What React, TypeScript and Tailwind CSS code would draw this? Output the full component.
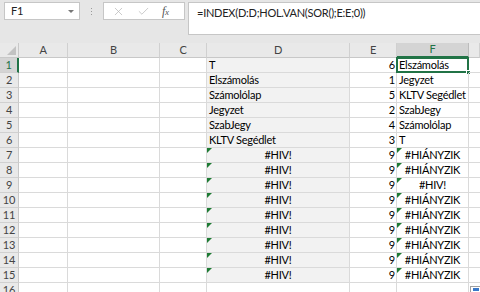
import React from 'react';
import { X, Check } from 'lucide-react';

const cols = [
  { id: 'A', w: 'w-[49px]' },
  { id: 'B', w: 'w-[92px]' },
  { id: 'C', w: 'w-[47px]' },
  { id: 'D', w: 'w-[143px]' },
  { id: 'E', w: 'w-[47px]' },
  { id: 'F', w: 'w-[72px]' },
  { id: 'G', w: 'w-[11px]' },
];

const dVals = ['T', 'Elszámolás', 'Számolólap', 'Jegyzet', 'SzabJegy', 'KLTV Segédlet'];
const fVals = ['Elszámolás', 'Jegyzet', 'KLTV Segédlet', 'SzabJegy', 'Számolólap', 'T'];
const eVals = [6, 1, 5, 2, 4, 3];

const rows = Array.from({ length: 16 }, (_, i) => {
  const n = i + 1;
  if (n <= 6) return { n, d: dVals[i], e: String(eVals[i]), f: fVals[i], err: false };
  if (n <= 15) return { n, d: '#HIV!', e: '9', f: n === 9 ? '#HIV!' : '#HIÁNYZIK', err: true };
  return { n, d: '', e: '', f: '', err: false };
});

// small green "error" corner marker
const Tri = () => (
  <span className="absolute left-0 top-0 w-0 h-0 border-t-[5px] border-t-[#1e7b34] border-r-[5px] border-r-transparent" />
);

const App: React.FC = () => {
  return (
    <div className="w-[480px] h-[292px] overflow-hidden bg-white font-['Lato',sans-serif] text-[11px] tracking-[-0.25px] text-black">
      {/* Formula bar */}
      <div className="h-[43px] bg-[#e6e6e6] flex items-start pt-[2px]">
        <div className="ml-[4px] w-[76px] h-[18px] bg-white border border-[#c6c6c6] flex items-center justify-between pl-[6px] pr-[5px]">
          <span className="text-[#222]">F1</span>
          <span className="w-0 h-0 border-l-[3px] border-r-[3px] border-t-[3px] border-l-transparent border-r-transparent border-t-[#777]" />
        </div>
        <div className="w-[23px] h-[18px] flex flex-col items-center justify-center gap-[2px]">
          <span className="w-[1px] h-[1px] bg-[#9a9a9a]" />
          <span className="w-[1px] h-[1px] bg-[#9a9a9a]" />
          <span className="w-[1px] h-[1px] bg-[#9a9a9a]" />
        </div>
        <div className="w-[82px] h-[18px] bg-white border border-[#c6c6c6] flex items-center pl-[8px] gap-[12px]">
          <X size={13} strokeWidth={1.3} className="text-[#b5b5b5]" />
          <Check size={13} strokeWidth={1.3} className="text-[#b5b5b5]" />
          <span className="font-['Liberation_Serif',serif] italic text-[12px] text-[#555] leading-none">
            f<span className="text-[9px]">x</span>
          </span>
        </div>
        <div className="ml-[3px] flex-1 h-[33px] bg-white border border-r-0 border-[#c6c6c6] pl-[8px] pt-[2px] text-[#222]">
          =INDEX(D:D;HOL.VAN(SOR();E:E;0))
        </div>
      </div>

      {/* Column headers */}
      <div className="flex h-[15px] bg-[#e9e9e9] text-[#444]">
        <div className="w-[19px] h-full border-r border-b border-[#c8c8c8] relative">
          <span className="absolute right-[2px] bottom-[2px] w-0 h-0 border-l-[9px] border-l-transparent border-b-[9px] border-b-[#c2c2c2]" />
        </div>
        {cols.map((c) => (
          <div
            key={c.id}
            className={`${c.w} h-full flex items-center justify-center border-r ${
              c.id === 'F'
                ? 'bg-[#d4d4d4] text-[#217346] border-r-[#bcbcbc] border-b-2 border-b-[#217346]'
                : 'border-[#d0d0d0] border-b border-b-[#c8c8c8]'
            }`}
          >
            {c.id !== 'G' ? c.id : ''}
          </div>
        ))}
      </div>

      {/* Grid rows */}
      {rows.map((r) => (
        <div key={r.n} className="flex h-[15px]">
          <div
            className={`w-[19px] h-full flex items-center justify-center text-[11px] border-b border-[#d0d0d0] ${
              r.n === 1
                ? 'bg-[#d4d4d4] text-[#217346] border-r-2 border-r-[#217346]'
                : 'bg-[#e9e9e9] text-[#444] border-r border-r-[#c8c8c8]'
            }`}
          >
            {r.n}
          </div>
          <div className="w-[49px] h-full border-r border-b border-[#dadada]" />
          <div className="w-[92px] h-full border-r border-b border-[#dadada]" />
          <div className="w-[47px] h-full border-r border-b border-[#dadada]" />
          <div
            className={`w-[143px] h-full border-r border-b border-[#dadada] relative flex items-end pb-[1px] px-[2px] ${
              r.n <= 15 ? 'bg-[#f2f2f2]' : ''
            } ${r.err ? 'justify-center' : ''}`}
          >
            {r.err && <Tri />}
            <span className="leading-[13px]">{r.d}</span>
          </div>
          <div className="w-[47px] h-full border-r border-b border-[#dadada] flex items-end justify-end pb-[1px] pr-[1px]">
            <span className="leading-[13px]">{r.e}</span>
          </div>
          <div
            className={`w-[72px] h-full border-r border-b border-[#dadada] relative flex items-end pb-[1px] px-[2px] ${
              r.err ? 'justify-center' : ''
            }`}
          >
            {r.err && <Tri />}
            <span className="leading-[13px] whitespace-nowrap">{r.f}</span>
            {r.n === 1 && (
              <>
                <span className="absolute -left-[1px] -top-[1px] -right-[1px] -bottom-[1px] border-2 border-[#217346]" />
                <span className="absolute -right-[3px] -bottom-[3px] w-[5px] h-[5px] bg-[#217346] border border-white" />
              </>
            )}
          </div>
          <div className="flex-1 h-full border-b border-[#dadada] relative">
            {r.n === 16 && (
              <span className="absolute left-[1px] top-[3px] w-[11px] h-[9px] bg-white border border-[#a0a0a0] flex items-start justify-center pt-[1px]">
                <span className="w-[6px] h-[3px] bg-[#3a78c9]" />
              </span>
            )}
          </div>
        </div>
      ))}
    </div>
  );
};

export default App;
